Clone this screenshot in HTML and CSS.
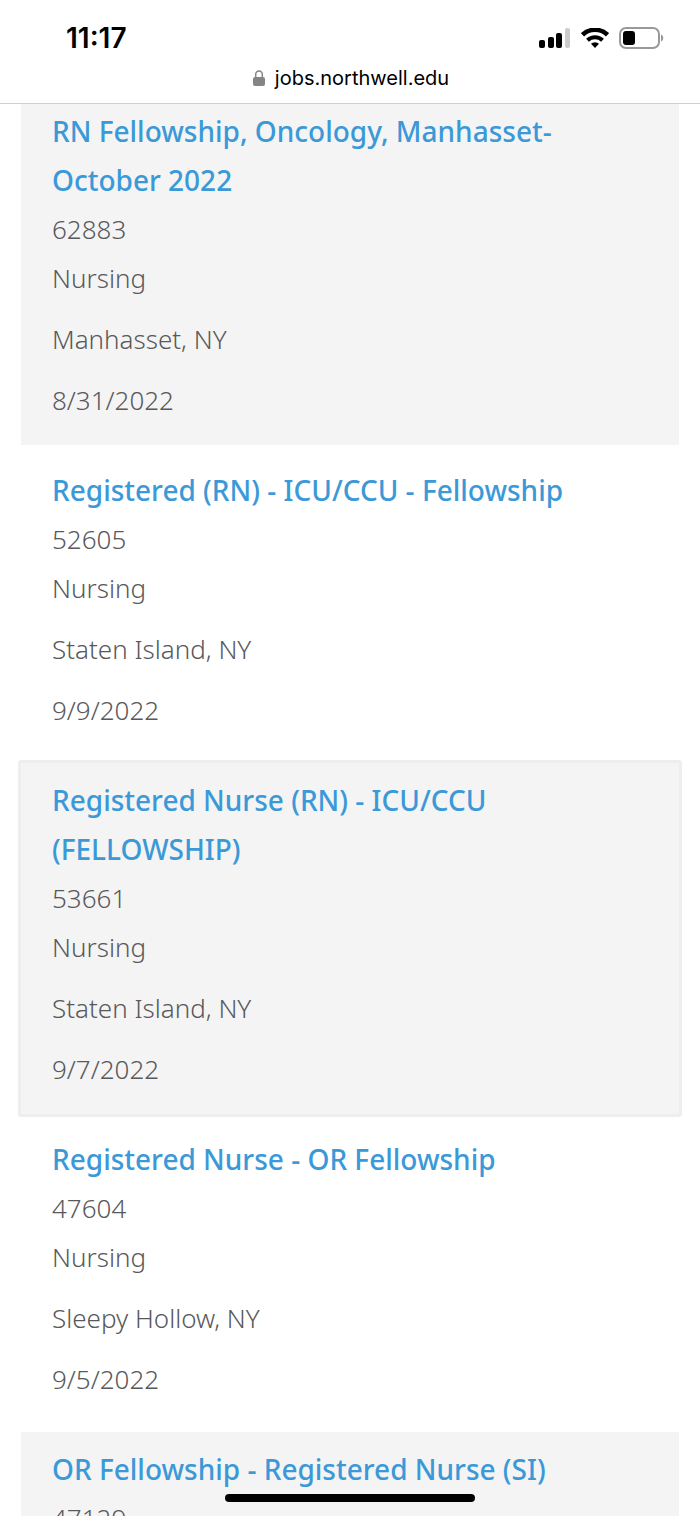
FILE: index.html
```
<!DOCTYPE html>
<html lang="en">
<head>
  <meta charset="UTF-8">
  <meta name="viewport" content="width=device-width, initial-scale=1">
  <title>Northwell Jobs</title>
  <link rel="stylesheet" href="styles.css">
</head>
<body>

  <header class="browser">
    <div class="status-bar">
      <span class="time">11:17</span>
      <div class="status-icons">
        <svg width="32" height="20" viewBox="0 0 32 20">
          <rect x="0" y="12" width="6" height="8" rx="2"/>
          <rect x="9" y="9" width="6" height="11" rx="2"/>
          <rect x="17" y="5" width="6" height="15" rx="2"/>
          <rect x="26" y="0" width="5" height="20" rx="2" fill="#ccc"/>
        </svg>
        <svg width="28" height="20" viewBox="0 0 28 20">
          <path d="M1.500 6.800a18 18 0 0 1 25 0" fill="none" stroke="#000" stroke-width="4.500"/>
          <path d="M6.500 12.200a10.800 10.800 0 0 1 15 0" fill="none" stroke="#000" stroke-width="4"/>
          <path d="M14 20l-4-4.200a5.800 5.800 0 0 1 8 0z"/>
        </svg>
        <svg width="46" height="22" viewBox="0 0 46 22">
          <rect x="1" y="1" width="39" height="20" rx="6" fill="#fff" stroke="#999" stroke-width="2"/>
          <rect x="4" y="4" width="12" height="14" rx="3"/>
          <path d="M42 7.500c3 1.200 3 5.800 0 7z" fill="#999"/>
        </svg>
      </div>
    </div>
    <div class="address-bar">
      <svg width="12" height="16" viewBox="0 0 12 16">
        <path d="M2.700 8V4.500a3.300 3.500 0 0 1 6.600 0V8" fill="none" stroke="#858587" stroke-width="1.500"/>
        <rect x="0" y="7" width="12" height="9" rx="2" fill="#858587"/>
      </svg>
      <span>jobs.northwell.edu</span>
    </div>
  </header>

  <main class="results">
    <ul class="job-list">
      <li class="job shaded">
        <a class="job-title" href="#">RN Fellowship, Oncology, Manhasset-October 2022</a>
        <p>62883</p>
        <p>Nursing</p>
        <p class="spaced">Manhasset, NY</p>
        <p class="spaced">8/31/2022</p>
      </li>
      <li class="job">
        <a class="job-title" href="#">Registered (RN) - ICU/CCU - Fellowship</a>
        <p>52605</p>
        <p>Nursing</p>
        <p class="spaced">Staten Island, NY</p>
        <p class="spaced">9/9/2022</p>
      </li>
      <li class="job shaded active">
        <a class="job-title" href="#">Registered Nurse (RN) - ICU/CCU (FELLOWSHIP)</a>
        <p>53661</p>
        <p>Nursing</p>
        <p class="spaced">Staten Island, NY</p>
        <p class="spaced">9/7/2022</p>
      </li>
      <li class="job">
        <a class="job-title" href="#">Registered Nurse - OR Fellowship</a>
        <p>47604</p>
        <p>Nursing</p>
        <p class="spaced">Sleepy Hollow, NY</p>
        <p class="spaced">9/5/2022</p>
      </li>
      <li class="job shaded">
        <a class="job-title" href="#">OR Fellowship - Registered Nurse (SI)</a>
        <p>47129</p>
      </li>
    </ul>
  </main>

  <div class="home-indicator"></div>

</body>
</html>
```
FILE: styles.css
```
* {
  box-sizing: border-box;
}

body {
  margin: 0;
  height: 100vh;
  display: flex;
  flex-direction: column;
  overflow: hidden;
  background-color: #fff;
  color: #58595b;
  font-family: "Noto Sans", sans-serif;
}

.browser {
  flex: none;
  background-color: #fff;
  border-bottom: 1px solid #d0d0d0;
  color: #000;
  font-family: Inter, sans-serif;
}

.status-bar {
  display: flex;
  justify-content: space-between;
  align-items: center;
  height: 64px;
  padding: 12px 35px 0 66px;
}

.time {
  font-size: 28px;
  font-weight: 600;
}

.status-icons {
  display: flex;
  align-items: center;
  gap: 10px;
}

.address-bar {
  display: flex;
  justify-content: center;
  align-items: center;
  gap: 10px;
  height: 39px;
  padding: 0 0 11px 2px;
  font-size: 20px;
}

.results {
  flex: 1;
  min-height: 0;
  overflow: hidden;
}

/* first row is partly scrolled under the browser bar */
.job-list {
  list-style: none;
  margin: -10px 21px 0;
  padding: 0;
}

.job {
  margin-bottom: 8px;
  padding: 13px 31px 20px;
  font-size: 26px;
  line-height: 49px;
}

.job p {
  margin: 0;
  font-weight: 300;
}

.job .spaced {
  margin-top: 12px;
}

.job-title {
  display: block;
  color: #3b99d8;
  font-size: 28px;
  font-weight: 500;
  text-decoration: none;
}

.shaded {
  background-color: #f4f4f4;
}

.active {
  border-radius: 1px;
  box-shadow: 0 0 0 3px #eee;
}

.home-indicator {
  position: fixed;
  bottom: 14px;
  left: 50%;
  width: 250px;
  height: 8px;
  margin-left: -125px;
  border-radius: 4px;
  background-color: #000;
}
```
